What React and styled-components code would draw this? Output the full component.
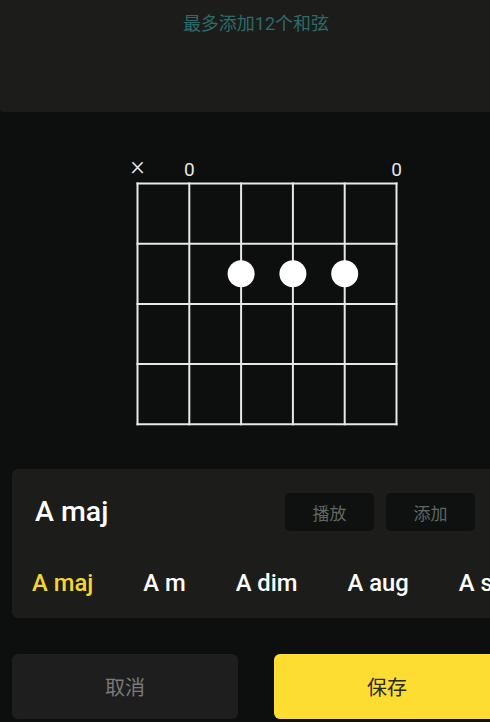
import React, { useState } from "react";
import styled, { createGlobalStyle } from "styled-components";

const GlobalStyle = createGlobalStyle`
  html, body {
    margin: 0;
    padding: 0;
    background: #0c0f0d;
    overflow: hidden;
  }
  body {
    font-family: Roboto, "Noto Sans CJK SC", sans-serif;
  }
`;

const Screen = styled.div`
  width: 512px;
  height: 722px;
  background: #0c0f0d;
  display: flex;
  flex-direction: column;
`;

const TopPanel = styled.div`
  height: 112px;
  background: #1c1d1b;
  border-radius: 0 0 4px 4px;
  display: flex;
  justify-content: center;
  padding-top: 11px;
  box-sizing: border-box;
`;

const Hint = styled.div`
  font-size: 18px;
  line-height: 26px;
  color: #2d6a6a;
`;

const DiagramArea = styled.div`
  padding: 38px 0 41px 128px;

  svg {
    display: block;
  }
`;

const Panel = styled.div`
  margin: 0 12px;
  height: 149px;
  background: #1c1d1b;
  border-radius: 6px;
  box-sizing: border-box;
  padding-top: 24px;
  overflow: hidden;
`;

const HeaderRow = styled.div`
  display: flex;
  align-items: center;
  padding: 0 25px 0 23px;
`;

const Title = styled.div`
  flex: 1;
  font-size: 28.5px;
  font-weight: 500;
  color: #ffffff;
  line-height: 38px;
`;

const SmallButton = styled.button`
  width: 89px;
  height: 38px;
  border: none;
  border-radius: 5px;
  background: #0e110f;
  color: #5e6863;
  font-family: "Noto Sans CJK SC", sans-serif;
  font-size: 17px;
  padding: 0;
  & + & {
    margin-left: 12px;
  }
`;

const ChordList = styled.div`
  display: flex;
  gap: 50px;
  padding-left: 20px;
  margin-top: 37px;
  white-space: nowrap;
`;

const ChordItem = styled.div`
  font-size: 23.8px;
  font-weight: 500;
  line-height: 30px;
  color: ${props => (props.$active ? "#f7d52e" : "#ffffff")};
`;

const Footer = styled.div`
  display: grid;
  grid-template-columns: 226px 226px;
  gap: 36px;
  padding: 36px 12px 0;
`;

const FooterButton = styled.button`
  height: 65px;
  border: none;
  border-radius: 6px;
  background: ${props => (props.$primary ? "#fedd33" : "#1e1e1e")};
  color: ${props => (props.$primary ? "#2c2a1a" : "#7a7a7a")};
  font-family: "Noto Sans CJK SC", sans-serif;
  font-size: 20px;
  padding: 0;
`;

const stringX = [9.5, 61.3, 113.1, 164.9, 216.7, 268.5];
const fretY = [33.5, 93.7, 153.9, 214.1, 274.3];

// string index / fret number (fret 2 = second row of the grid)
const dots = [
  { s: 2, f: 2 },
  { s: 3, f: 2 },
  { s: 4, f: 2 }
];

const marks = [
  { s: 0, text: "×" },
  { s: 1, text: "0" },
  { s: 5, text: "0" }
];

const ChordDiagram = () => {
  const line = "#e8e8e8";
  return (
    <svg width="280" height="278" viewBox="0 0 280 278">
      {marks.map(m => (
        <text
          key={m.s}
          x={stringX[m.s]}
          y={m.text === "×" ? 25 : 25.7}
          fill="#e6e6e6"
          fontSize={m.text === "×" ? 27 : 19}
          fontWeight={m.text === "×" ? 300 : 400}
          fontFamily="Roboto, sans-serif"
          textAnchor="middle"
        >
          {m.text}
        </text>
      ))}
      {stringX.map((x, i) => (
        <line key={"s" + i} x1={x} y1={fretY[0] - 1} x2={x} y2={fretY[4] + 1} stroke={line} strokeWidth="2" />
      ))}
      {fretY.map((y, i) => (
        <line key={"f" + i} x1={stringX[0] - 1} y1={y} x2={stringX[5] + 1} y2={y} stroke={line} strokeWidth="2" />
      ))}
      {dots.map(d => (
        <circle
          key={d.s}
          cx={stringX[d.s]}
          cy={(fretY[d.f - 1] + fretY[d.f]) / 2}
          r="13.5"
          fill="#ffffff"
        />
      ))}
    </svg>
  );
};

const chords = ["A maj", "A m", "A dim", "A aug", "A sus2", "A sus4", "A 7"];

const App = () => {
  const [selected, setSelected] = useState(0);

  return (
    <Screen>
      <GlobalStyle />

      <TopPanel>
        <Hint>最多添加12个和弦</Hint>
      </TopPanel>

      <DiagramArea>
        <ChordDiagram />
      </DiagramArea>

      <Panel>
        <HeaderRow>
          <Title>{chords[selected]}</Title>
          <SmallButton type="button">播放</SmallButton>
          <SmallButton type="button">添加</SmallButton>
        </HeaderRow>

        <ChordList>
          {chords.map((c, i) => (
            <ChordItem key={c} $active={i === selected} onClick={() => setSelected(i)}>
              {c}
            </ChordItem>
          ))}
        </ChordList>
      </Panel>

      <Footer>
        <FooterButton type="button">取消</FooterButton>
        <FooterButton type="button" $primary>保存</FooterButton>
      </Footer>
    </Screen>
  );
};

export default App;
